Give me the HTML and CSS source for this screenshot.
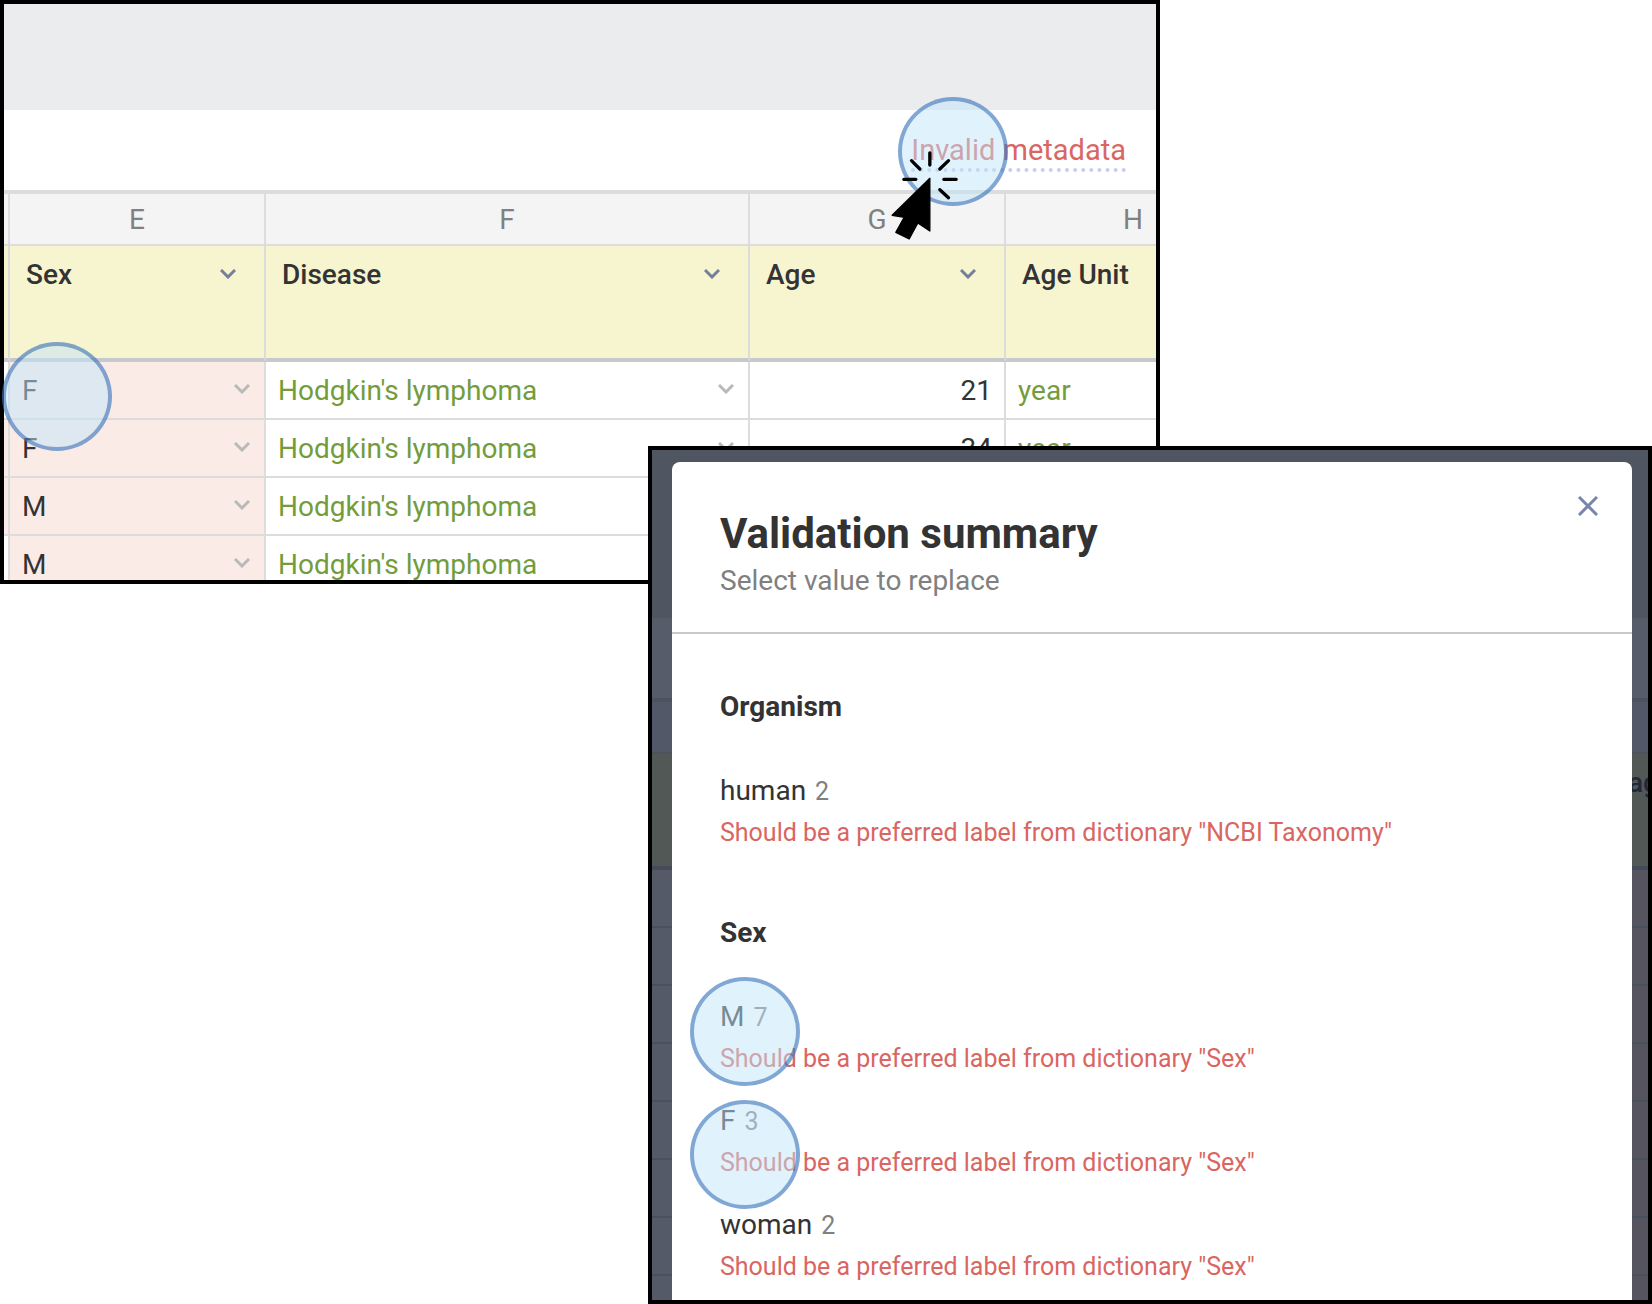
FILE: index.html
```html
<!DOCTYPE html>
<html lang="en">
<head>
<meta charset="utf-8">
<title>Validation summary</title>
<link rel="stylesheet" href="styles.css">
</head>
<body>
<svg class="defs" aria-hidden="true">
  <symbol id="chevron" viewBox="0 0 16 10"><path d="M1 1l7 7 7-7"/></symbol>
</svg>
<main class="stage">
  <section class="shot sheet">
    <div class="viewport">
      <div class="band"></div>
      <div class="toolbar">
        <a class="invalid" href="#summary">Invalid metadata</a>
      </div>
      <table class="grid">
        <colgroup><col class="c-edge"><col class="c-std"><col class="c-wide"><col class="c-std"><col class="c-std"></colgroup>
        <thead>
          <tr class="letters"><th></th><th>E</th><th>F</th><th>G</th><th>H</th></tr>
          <tr class="names">
            <th></th>
            <th><div class="cell">Sex<svg class="chev"><use href="#chevron"/></svg></div></th>
            <th><div class="cell">Disease<svg class="chev"><use href="#chevron"/></svg></div></th>
            <th><div class="cell">Age<svg class="chev"><use href="#chevron"/></svg></div></th>
            <th><div class="cell">Age Unit<svg class="chev"><use href="#chevron"/></svg></div></th>
          </tr>
        </thead>
        <tbody>
          <tr><td></td><td class="bad"><div class="cell">F<svg class="chev"><use href="#chevron"/></svg></div></td><td class="ok"><div class="cell">Hodgkin's lymphoma<svg class="chev"><use href="#chevron"/></svg></div></td><td class="num">21</td><td class="ok">year</td></tr>
          <tr><td class="bad"></td><td class="bad"><div class="cell">F<svg class="chev"><use href="#chevron"/></svg></div></td><td class="ok"><div class="cell">Hodgkin's lymphoma<svg class="chev"><use href="#chevron"/></svg></div></td><td class="num">34</td><td class="ok">year</td></tr>
          <tr><td class="bad"></td><td class="bad"><div class="cell">M<svg class="chev"><use href="#chevron"/></svg></div></td><td class="ok"><div class="cell">Hodgkin's lymphoma<svg class="chev"><use href="#chevron"/></svg></div></td><td class="num"></td><td class="ok"></td></tr>
          <tr><td></td><td class="bad"><div class="cell">M<svg class="chev"><use href="#chevron"/></svg></div></td><td class="ok"><div class="cell">Hodgkin's lymphoma<svg class="chev"><use href="#chevron"/></svg></div></td><td class="num"></td><td class="ok"></td></tr>
        </tbody>
      </table>
    </div>
    <span class="spot spot-cell"></span>
    <span class="spot spot-link"></span>
    <svg class="pointer" viewBox="0 0 200 270" aria-hidden="true">
      <path class="rays" d="M116 9v36M61 32l25 25M172 32l-26 25M38 88h36M158 88h37M146 119l26 24"/>
      <path class="arrow" d="M116 85v158l-36-24-26 48-40-20 25-45-36-6z"/>
    </svg>
  </section>

  <section class="shot overlay" id="summary">
    <div class="strip">
      <div class="s-band"></div><div class="s-bar"></div><div class="s-letters"></div><div class="s-names"></div>
      <div class="s-row"></div><div class="s-row"></div><div class="s-row"></div><div class="s-row"></div><div class="s-row"></div><div class="s-row"></div><div class="s-row"></div><div class="s-row"></div>
    </div>
    <div class="modal" role="dialog" aria-labelledby="title">
      <header class="head">
        <div>
          <h1 id="title">Validation summary</h1>
          <p class="sub">Select value to replace</p>
        </div>
        <button class="close" type="button" aria-label="Close"><svg viewBox="0 0 20 20"><path d="M1 1l18 18M19 1L1 19"/></svg></button>
      </header>
      <div class="body">
        <section class="group">
          <h2>Organism</h2>
          <div class="item"><p class="value">human <span class="count">2</span></p><p class="error">Should be a preferred label from dictionary "NCBI Taxonomy"</p></div>
        </section>
        <section class="group">
          <h2>Sex</h2>
          <div class="item"><p class="value">M <span class="count">7</span></p><p class="error">Should be a preferred label from dictionary "Sex"</p><span class="spot spot-m"></span></div>
          <div class="item"><p class="value">F <span class="count">3</span></p><p class="error">Should be a preferred label from dictionary "Sex"</p><span class="spot spot-f"></span></div>
          <div class="item"><p class="value">woman <span class="count">2</span></p><p class="error">Should be a preferred label from dictionary "Sex"</p></div>
        </section>
      </div>
    </div>
    <div class="strip strip-right">
      <div class="s-band"></div><div class="s-bar"></div><div class="s-letters"></div><div class="s-names">ag</div>
      <div class="s-row"></div><div class="s-row"></div><div class="s-row"></div><div class="s-row"></div><div class="s-row"></div><div class="s-row"></div><div class="s-row"></div><div class="s-row"></div>
    </div>
  </section>
</main>
</body>
</html>
```
FILE: styles.css
```css
* { box-sizing: border-box; }
body { margin: 0; background: #fff; color: #333; font: 28px/36px Roboto, "Liberation Sans", sans-serif; }
h1, h2, p { margin: 0; }
.defs { display: none; }

.stage {
  display: grid;
  grid-template-columns: 648fr 512fr 492fr;
  grid-template-rows: 446px 138px minmax(0, 1fr);
  height: 100vh;
}
.shot { position: relative; border: 4px solid #000; min-width: 0; min-height: 0; }
.sheet { grid-area: 1 / 1 / 3 / 3; background: #fff; }
.viewport { height: 100%; overflow: hidden; }
.overlay { grid-area: 2 / 2 / 4 / 4; display: grid; grid-template-columns: 20px 1fr 16px; grid-template-rows: minmax(0, 1fr); overflow: hidden; background: #4f5561; }

.band { height: 106px; background: #ebecee; }
.toolbar { height: 80px; display: flex; justify-content: flex-end; align-items: flex-start; padding: 23px 30px 0; }
.invalid { color: #d96661; text-decoration: none; font-size: 29px; line-height: 35px; border-bottom: 4px dotted #c6cff2; }

.grid { table-layout: fixed; width: 1258px; border-collapse: separate; border-spacing: 0; border-top: 4px solid #dcdcdc; }
.c-edge { width: 6px; }
.c-std { width: 256px; }
.c-wide { width: 484px; }
th, td { padding: 2px 12px 0; border-right: 2px solid #dcdcdc; border-bottom: 2px solid #dcdcdc; text-align: left; overflow: hidden; }
th:first-child, td:first-child { padding: 0; }
.letters th { height: 52px; background: #f4f4f4; color: #808080; font-weight: 400; text-align: center; }
.names th { height: 116px; padding: 11px 28px 0 16px; vertical-align: top; background: #f7f4d0; border-bottom: 4px solid #c8c9cd; font-weight: 500; }
td { height: 58px; }
.cell { display: flex; align-items: center; justify-content: space-between; }
.chev { width: 16px; height: 10px; margin: 0 2px 4px 0; fill: none; stroke: #b9b9b9; stroke-width: 3; }
.names .chev { margin: 0 0 2px; stroke: #74809b; }
.bad { background: #fbebe7; }
.ok { color: #739c3c; }
.num { text-align: right; }

.spot { position: absolute; width: 110px; height: 109px; border: 4px solid rgba(64, 122, 191, .66); border-radius: 50%; background: rgba(192, 229, 249, .49); background-clip: padding-box; }
.spot-cell { left: -2px; top: 338px; }
.spot-link { right: 148px; top: 93px; }
.pointer { position: absolute; right: 198px; top: 146px; width: 67px; height: 90px; }
.rays { fill: none; stroke: #000; stroke-width: 10; stroke-linecap: round; }
.arrow { fill: #000; stroke: #000; stroke-width: 4; stroke-linejoin: round; }

.strip { overflow: hidden; }
.s-band { height: 168px; }
.s-bar { height: 84px; background: #565c69; border-bottom: 4px solid #4d525f; }
.s-letters { height: 52px; background: #525867; border-bottom: 2px solid #4d525f; }
.s-names { height: 116px; padding-top: 11px; text-indent: -4px; background: #525856; border-bottom: 4px solid #464b5a; color: #20283a; font-weight: 500; }
.s-row { height: 58px; background: #545a67; border-bottom: 2px solid #4b505e; }
.strip-right .s-row { background: #55545f; border-bottom-color: #4b505e; }

.modal { margin-top: 12px; background: #fff; border-radius: 8px 8px 0 0; }
.head { display: flex; justify-content: space-between; align-items: flex-start; height: 172px; padding: 48px 34px 0 48px; border-bottom: 2px solid #c8c9cd; }
h1 { font-size: 42px; line-height: 48px; font-weight: 700; }
.sub { margin-top: 5px; color: #808080; }
.close { width: 20px; height: 20px; margin-top: -14px; padding: 0; border: 0; background: none; }
.close svg { display: block; width: 20px; height: 20px; fill: none; stroke: #7784ae; stroke-width: 3; }
.body { padding: 55px 48px 0; }
h2 { font-size: 28px; line-height: 36px; font-weight: 700; margin-bottom: 48px; }
.group { margin-bottom: 38px; }
.item { position: relative; height: 104px; }
.count { margin-left: 2px; font-size: 25px; color: #808080; }
.error { margin-top: 7px; font-size: 25px; line-height: 32px; color: #d96661; white-space: nowrap; }
.spot-m { left: -30px; top: -22px; }
.spot-f { left: -30px; top: -3px; }
```
